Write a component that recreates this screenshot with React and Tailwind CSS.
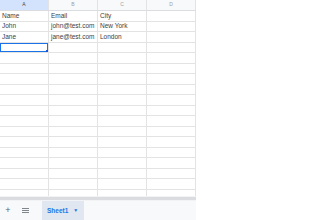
const COLUMNS = ["A", "B", "C", "D"];

const DATA = [
    ["Name", "Email", "City", ""],
    ["John", "john@test.com", "New York", ""],
    ["Jane", "jane@test.com", "London", ""],
];

const ROW_COUNT = 18;

function Cell({ value, selected }) {
    return (
        <div className="relative flex h-full w-[49px] shrink-0 items-center overflow-hidden whitespace-nowrap border-r border-[#e3e3e3] px-[2px] text-[6.5px] text-[#3c4043]">
            {value}
            {selected && (
                <>
                    <div className="absolute inset-0 border border-[#1a73e8]" />
                    <div className="absolute -bottom-[2px] -right-[2px] z-10 h-[4px] w-[4px] bg-[#1a56db]" />
                </>
            )}
        </div>
    );
}

export default function App() {
    const rows = Array.from({ length: ROW_COUNT }, (_, i) => DATA[i] || ["", "", "", ""]);

    return (
        <div className="h-[220px] w-[330px] overflow-hidden bg-white font-['Liberation_Sans',Arial,sans-serif]">
            <div className="flex h-full w-[196px] flex-col">
                <div className="flex h-[11px] shrink-0 border-b border-[#dadce0] bg-[#f8f9fa]">
                    {COLUMNS.map((col, i) => (
                        <div
                            key={col}
                            className={
                                i === 0
                                    ? "flex h-full w-[49px] shrink-0 items-center justify-center border-r border-[#e3e3e3] bg-[#d3e3fd] text-[5px] text-[#444746]"
                                    : "flex h-full w-[49px] shrink-0 items-center justify-center border-r border-[#e3e3e3] text-[5px] text-[#9aa0a6]"
                            }
                        >
                            {col}
                        </div>
                    ))}
                </div>

                <div className="h-[185px] shrink-0 overflow-hidden">
                    {rows.map((row, r) => (
                        <div
                            key={r}
                            className="flex h-[10.5px] border-b border-[#e3e3e3]"
                        >
                            {row.map((value, c) => (
                                <Cell
                                    key={c}
                                    value={value}
                                    selected={r === 3 && c === 0}
                                />
                            ))}
                        </div>
                    ))}
                </div>

                <div className="h-[5px] shrink-0 bg-[#f1f3f4] py-[1px]">
                    <div className="h-[3px] w-full bg-[#dadce0]" />
                </div>

                <div className="flex min-h-0 flex-1 items-stretch bg-[#f8f9fa]">
                    <div className="flex w-[16px] items-center justify-center text-[9px] text-[#5f6368]">
                        +
                    </div>
                    <div className="flex w-[18px] items-center justify-center">
                        <div className="flex flex-col gap-[1px]">
                            <div className="h-[1px] w-[7px] bg-[#80868b]" />
                            <div className="h-[1px] w-[7px] bg-[#80868b]" />
                            <div className="h-[1px] w-[7px] bg-[#80868b]" />
                        </div>
                    </div>
                    <div className="ml-[8px] flex w-[42px] items-center gap-[5px] bg-[#e1e7f1] pl-[5px] text-[6.5px] font-bold text-[#1a73e8]">
                        Sheet1
                        <span className="text-[5px]">▼</span>
                    </div>
                </div>
            </div>
        </div>
    );
}
